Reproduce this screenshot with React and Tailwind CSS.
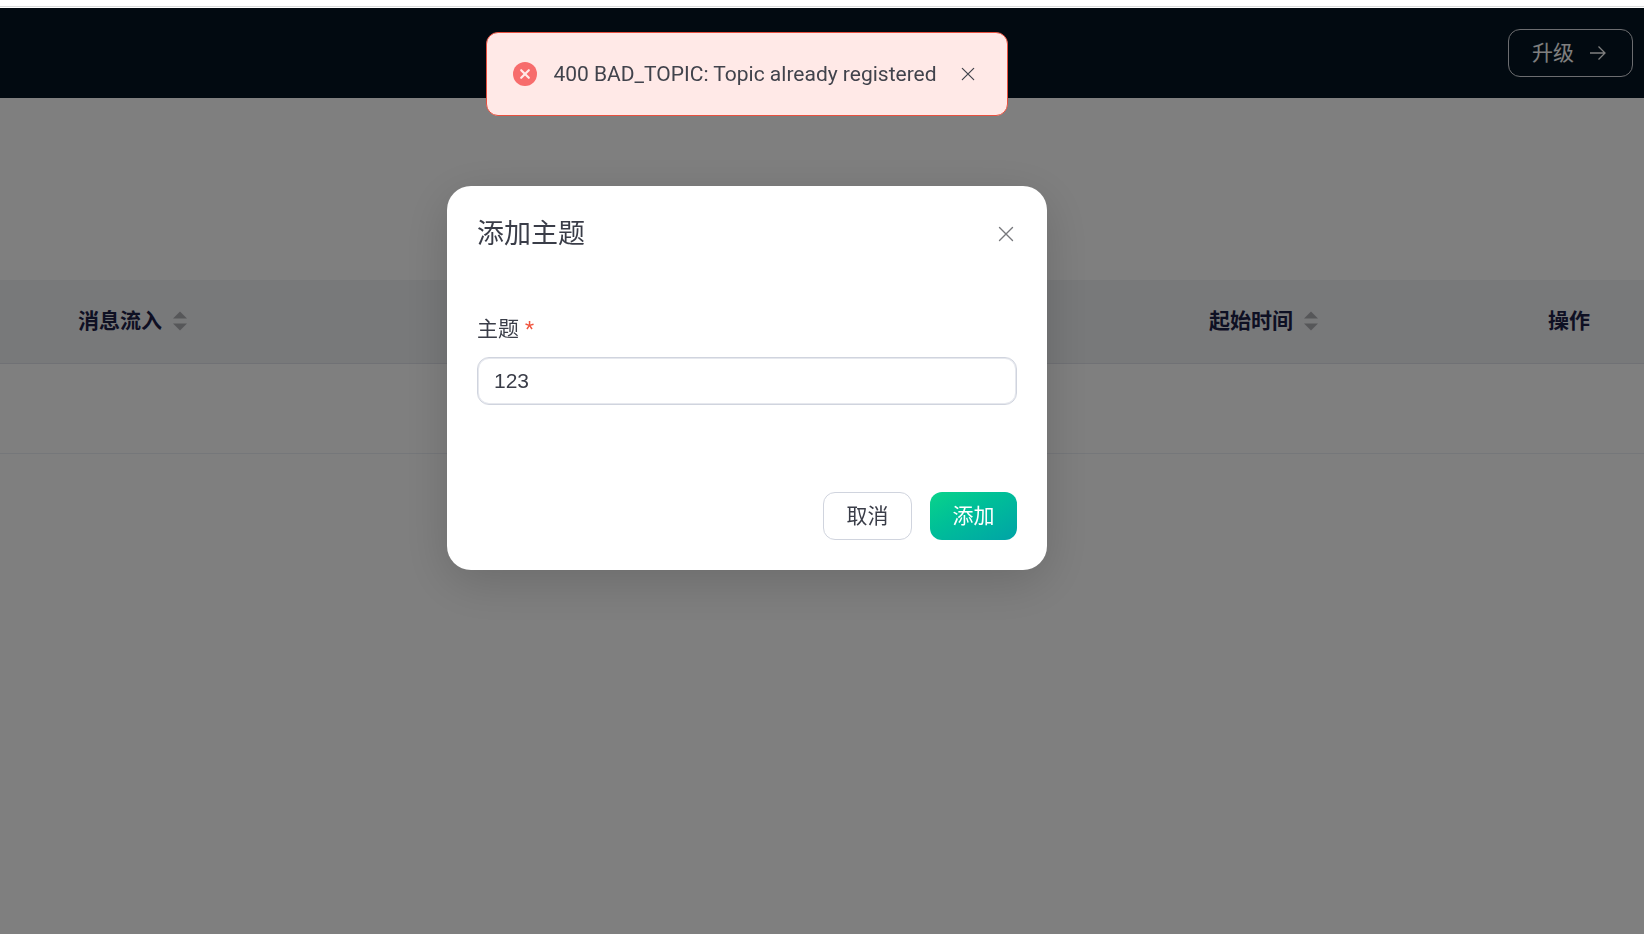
import { useState } from "react";

function CloseIcon({ className }) {
  return (
    <svg className={className} viewBox="0 0 16 16" fill="none" stroke="currentColor" strokeLinecap="round" aria-hidden="true">
      <path d="M1.5 1.5l13 13M14.5 1.5l-13 13" strokeWidth="1.4" />
    </svg>
  );
}

function SortIcon() {
  return (
    <svg className="h-5 w-3.5" viewBox="0 0 14 20" aria-hidden="true">
      <path d="M0 7.500L7 .5l7 7z" fill="#adaeb2" />
      <path d="M0 12.500h14l-7 7z" fill="#adaeb2" />
    </svg>
  );
}

function Header() {
  return (
    <>
      <div className="h-[7px] border-b border-[#dcdddd] bg-white"></div>
      <header className="mt-px flex h-[90px] items-start justify-end bg-[#051522] pt-[21px] pr-[11px]">
        <button className="flex h-12 items-center gap-4 rounded-xl border border-[#d9dae0] pr-[26px] pl-[23px] text-white">
          升级
          <svg className="h-4 w-4" viewBox="0 0 16 16" fill="none" stroke="currentColor" strokeWidth="1.3" aria-hidden="true">
            <path d="M0 8h15M8.5 1.5L15 8l-6.500 6.500" />
          </svg>
        </button>
      </header>
    </>
  );
}

function TopicTable() {
  return (
    <table className="mt-[182px] w-full table-fixed border-collapse text-left">
      <thead>
        <tr className="h-[83px] border-b border-[#e0e2ea] bg-[#f0f2f5] text-[#1d2047]">
          <th className="pl-[78px] font-bold">
            <span className="flex items-center gap-[11px]">
              消息流入
              <SortIcon />
            </span>
          </th>
          <th className="w-[359px] pl-5 font-bold">
            <span className="flex items-center gap-[11px]">
              起始时间
              <SortIcon />
            </span>
          </th>
          <th className="w-[96px] font-bold">操作</th>
        </tr>
      </thead>
      <tbody>
        <tr className="h-[90px] border-b border-[#ebeef5]">
          <td></td>
          <td></td>
          <td></td>
        </tr>
      </tbody>
    </table>
  );
}

function AddTopicDialog({ onClose }) {
  const [topic, setTopic] = useState("123");

  return (
    <div
      role="dialog"
      aria-labelledby="dialog-title"
      className="w-[600px] rounded-3xl bg-white p-[30px] text-[#3a3d48] shadow-[0_12px_48px_rgba(0,0,0,0.16)]"
    >
      <div className="flex h-9 items-center justify-between">
        <h2 id="dialog-title" className="text-[27px]">添加主题</h2>
        <button aria-label="关闭" className="mr-[3px] text-[#77787c]" onClick={onClose}>
          <CloseIcon className="h-4 w-4" />
        </button>
      </div>
      <form onSubmit={(e) => e.preventDefault()}>
        <label htmlFor="topic" className="mt-[61px] flex h-8 items-center gap-1.5">
          主题 <span className="text-[#f0553f]">*</span>
        </label>
        <input
          id="topic"
          type="text"
          className="mt-3 h-12 w-full rounded-xl border border-[#d0d4de] px-4 font-['Liberation_Sans','Noto_Sans_CJK_SC',sans-serif] shadow-[inset_0_0_0_1px_#e6e8ee] outline-none"
          value={topic}
          onChange={(e) => setTopic(e.target.value)}
        />
        <div className="mt-[87px] flex justify-end gap-[18px]">
          <button type="button" className="h-12 min-w-[89px] rounded-xl border border-[#d0d4de] px-5" onClick={onClose}>
            取消
          </button>
          <button type="submit" className="h-12 min-w-[87px] rounded-xl bg-linear-to-br from-[#0bd38a] to-[#00a3a6] px-5 text-white">
            添加
          </button>
        </div>
      </form>
    </div>
  );
}

function ErrorMessage({ onClose }) {
  return (
    <div
      role="alert"
      className="flex h-21 items-center rounded-xl border border-[#e8503f] bg-[#ffe9e7] pr-8 pl-[26px] text-[#41434c]"
    >
      <svg className="h-6 w-6" viewBox="0 0 24 24" aria-hidden="true">
        <circle cx="12" cy="12" r="12" fill="#f76c6c" />
        <path d="M8.200 8.200l7.600 7.600M15.800 8.200l-7.600 7.600" stroke="#ffe9e7" strokeWidth="2.2" strokeLinecap="round" />
      </svg>
      <p className="ml-4">400 BAD_TOPIC: Topic already registered</p>
      <button aria-label="关闭" className="ml-6" onClick={onClose}>
        <CloseIcon className="h-3.5 w-3.5" />
      </button>
    </div>
  );
}

export default function App() {
  const [dialogOpen, setDialogOpen] = useState(true);
  const [messageOpen, setMessageOpen] = useState(true);

  return (
    <div className="min-h-screen bg-white font-[Roboto,'Noto_Sans_CJK_SC',sans-serif] text-[21px] leading-8">
      <Header />
      <TopicTable />
      {dialogOpen && (
        <div className="fixed inset-x-0 top-2 bottom-0 flex items-start justify-center bg-black/50 pt-[178px] pr-[150px]">
          <AddTopicDialog onClose={() => setDialogOpen(false)} />
        </div>
      )}
      {messageOpen && (
        <div className="fixed inset-x-0 top-8 flex justify-center pr-[150px]">
          <ErrorMessage onClose={() => setMessageOpen(false)} />
        </div>
      )}
    </div>
  );
}
